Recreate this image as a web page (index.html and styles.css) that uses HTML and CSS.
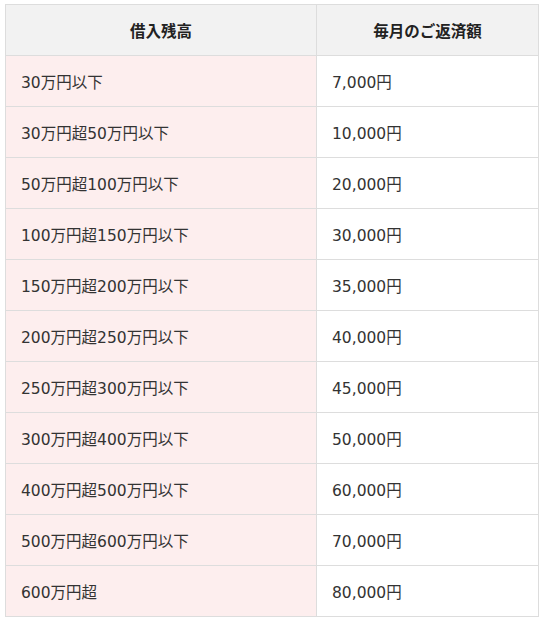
FILE: index.html
```html
<!DOCTYPE html>
<html lang="ja">
<head>
<meta charset="utf-8">
<link rel="stylesheet" href="styles.css">
</head>
<body>
<div class="wrap">
<table class="tbl">
<thead>
<tr><th class="c1">借入残高</th><th class="c2">毎月のご返済額</th></tr>
</thead>
<tbody>
<tr><td class="lbl">30万円以下</td><td>7,000円</td></tr>
<tr><td class="lbl">30万円超50万円以下</td><td>10,000円</td></tr>
<tr><td class="lbl">50万円超100万円以下</td><td>20,000円</td></tr>
<tr><td class="lbl">100万円超150万円以下</td><td>30,000円</td></tr>
<tr><td class="lbl">150万円超200万円以下</td><td>35,000円</td></tr>
<tr><td class="lbl">200万円超250万円以下</td><td>40,000円</td></tr>
<tr><td class="lbl">250万円超300万円以下</td><td>45,000円</td></tr>
<tr><td class="lbl">300万円超400万円以下</td><td>50,000円</td></tr>
<tr><td class="lbl">400万円超500万円以下</td><td>60,000円</td></tr>
<tr><td class="lbl">500万円超600万円以下</td><td>70,000円</td></tr>
<tr><td class="lbl">600万円超</td><td>80,000円</td></tr>
</tbody>
</table>
</div>
</body>
</html>
```
FILE: styles.css
```css
html, body { margin: 0; padding: 0; background: #fff; }
.wrap { padding: 4px 0 0 5px; }
.tbl {
  border-collapse: collapse;
  width: 533px;
  table-layout: fixed;
  font-family: "DejaVu Sans", "Noto Sans CJK JP", sans-serif;
  color: #333;
  font-size: 15.5px;
}
.tbl th, .tbl td {
  border: 1px solid #ddd;
  height: 51px;
  padding: 0 0 0 15px;
  box-sizing: border-box;
  vertical-align: middle;
}
.tbl th {
  background: #f2f2f2;
  font-weight: bold;
  text-align: center;
  padding: 0;
  color: #222;
}
.c1 { width: 311px; }
.c2 { width: 222px; }
.tbl td.lbl { background: #fdeeee; }
.tbl td { background: #fff; }
```
